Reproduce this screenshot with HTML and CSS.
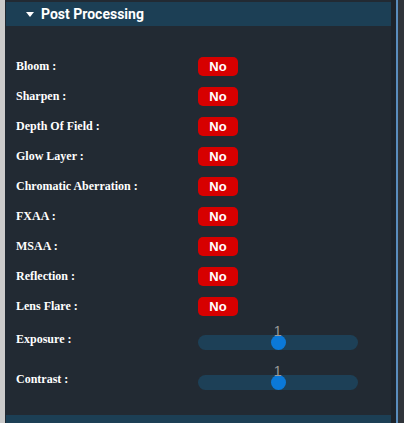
FILE: index.html
```html
<!DOCTYPE html>
<html>
<head>
<meta charset="utf-8">
<link rel="stylesheet" href="styles.css">
</head>
<body>
<div class="frame">
  <div class="gutter"></div>
  <div class="panel">
    <div class="header"><span class="caret"></span><span class="title">Post Processing</span></div>
    <div class="rows">
      <div class="row"><span class="label">Bloom :</span><span class="toggle">No</span></div>
      <div class="row"><span class="label">Sharpen :</span><span class="toggle">No</span></div>
      <div class="row"><span class="label">Depth Of Field :</span><span class="toggle">No</span></div>
      <div class="row"><span class="label">Glow Layer :</span><span class="toggle">No</span></div>
      <div class="row"><span class="label">Chromatic Aberration :</span><span class="toggle">No</span></div>
      <div class="row"><span class="label">FXAA :</span><span class="toggle">No</span></div>
      <div class="row"><span class="label">MSAA :</span><span class="toggle">No</span></div>
      <div class="row"><span class="label">Reflection :</span><span class="toggle">No</span></div>
      <div class="row"><span class="label">Lens Flare :</span><span class="toggle">No</span></div>
      <div class="row tall"><span class="label">Exposure :</span>
        <div class="slider"><div class="thumb" style="left: 50%"><span class="val">1</span></div></div>
      </div>
      <div class="row tall"><span class="label">Contrast :</span>
        <div class="slider"><div class="thumb" style="left: 50%"><span class="val">1</span></div></div>
      </div>
    </div>
    <div class="header next"></div>
  </div>
  <div class="edge"></div>
  <div class="line"></div>
  <div class="scroll"></div>
</div>
</body>
</html>
```
FILE: styles.css
```css
html, body {
  margin: 0;
  padding: 0;
  background: #212932;
}
.frame {
  display: flex;
  width: 404px;
  height: 423px;
  overflow: hidden;
  background: #212932;
}
.gutter {
  width: 5px;
  flex: none;
  background: #cbcbcb;
}
.panel {
  margin-left: 1px;
  width: 385px;
  flex: none;
  padding-top: 2px;
  display: flex;
  flex-direction: column;
  background: #222a33;
}
.header {
  height: 24px;
  flex: none;
  background: #1c3f55;
  display: flex;
  align-items: center;
  padding-left: 20px;
  box-sizing: border-box;
}
.header.next {
  margin-top: 14px;
}
.caret {
  width: 0;
  height: 0;
  border-left: 4px solid transparent;
  border-right: 4px solid transparent;
  border-top: 5px solid #ffffff;
  margin-right: 7px;
  margin-top: 1px;
}
.title {
  font-family: Roboto, "Liberation Sans", sans-serif;
  font-weight: 700;
  font-size: 14px;
  color: #ffffff;
}
.rows {
  padding: 25px 0 0 10px;
  display: flex;
  flex-direction: column;
}
.row {
  height: 30px;
  display: grid;
  grid-template-columns: 182px auto;
  align-items: center;
}
.row.tall {
  height: 40px;
}
.row.tall .label {
  margin-top: -4px;
}
.label {
  font-family: "Liberation Serif", "Times New Roman", serif;
  font-weight: 700;
  font-size: 12px;
  color: #ffffff;
}
.toggle {
  width: 40px;
  height: 19px;
  border-radius: 5px;
  background: #d70000;
  color: #ffffff;
  font-family: "Liberation Sans", Arial, sans-serif;
  font-weight: 700;
  font-size: 13px;
  display: flex;
  align-items: center;
  justify-content: center;
  justify-self: start;
}
.slider {
  position: relative;
  width: 160px;
  height: 15px;
  border-radius: 8px;
  background: #1d4057;
  margin-top: 3px;
}
.thumb {
  position: absolute;
  top: 0;
  width: 15px;
  height: 15px;
  margin-left: -7px;
  border-radius: 50%;
  background: #0b79d8;
}
.val {
  position: absolute;
  left: 50%;
  bottom: 12px;
  transform: translateX(-60%);
  font-family: "Liberation Sans", Arial, sans-serif;
  font-size: 14px;
  line-height: 14px;
  color: #9a9a9a;
}
.edge {
  width: 5px;
  flex: none;
  background: #1d242c;
}
.line {
  width: 2px;
  flex: none;
  background: #5a8dbd;
}
.scroll {
  flex: 1;
  background: #2f343a;
}
```
